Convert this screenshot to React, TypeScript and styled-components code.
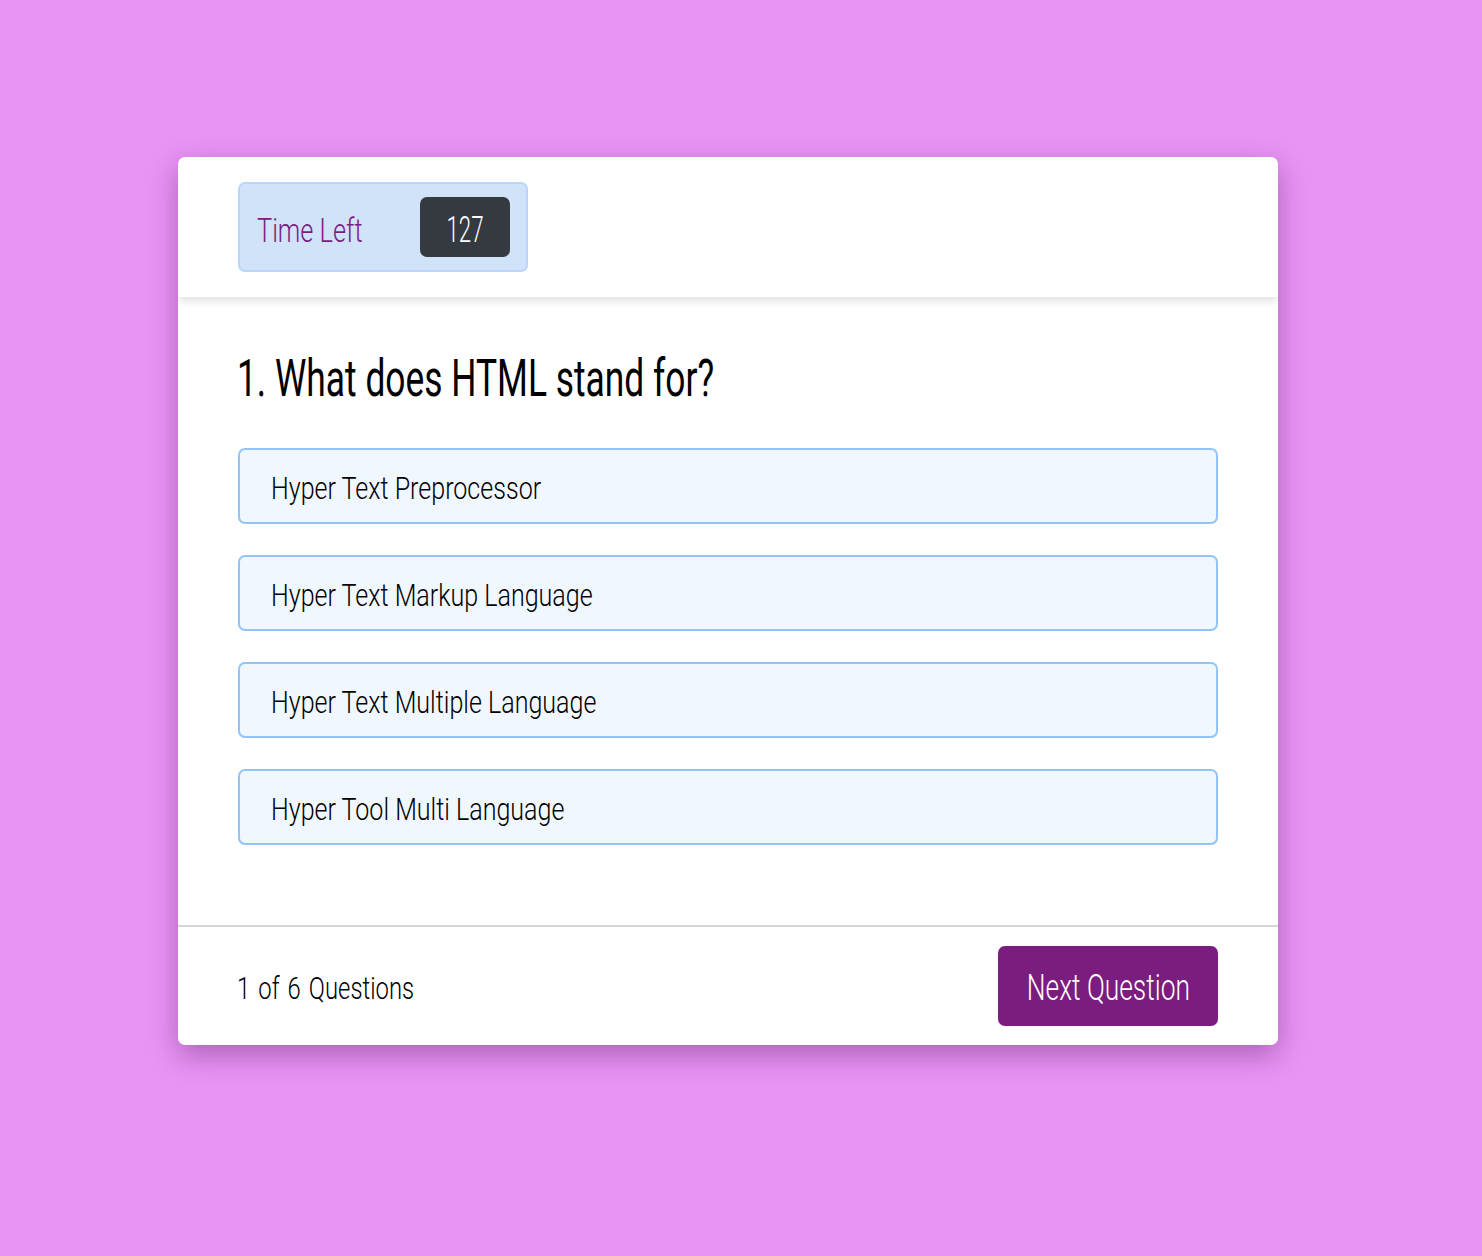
import React from "react";
import styled, { createGlobalStyle } from "styled-components";

const Global = createGlobalStyle`
  html, body { margin: 0; padding: 0; }
  body {
    background: #e893f5;
    font-family: Roboto, "Liberation Sans", sans-serif;
  }
`;

const Page = styled.div`
  min-height: 1256px;
  padding: 157px 0 0 178px;
  box-sizing: border-box;
`;

const Card = styled.div`
  width: 1100px;
  height: 888px;
  background: #fff;
  border-radius: 7px;
  box-shadow: 0 10px 28px rgba(60, 10, 70, 0.35);
  display: flex;
  flex-direction: column;
  overflow: hidden;
`;

const Narrow = styled.span<{ $scale?: number; $origin?: string }>`
  display: inline-block;
  white-space: nowrap;
  transform: scaleX(${(p) => p.$scale ?? 0.8});
  transform-origin: ${(p) => p.$origin ?? "left"} center;
`;

const Header = styled.div`
  height: 140px;
  box-sizing: border-box;
  padding: 25px 60px;
  box-shadow: 0 4px 8px rgba(0, 0, 0, 0.12);
  position: relative;
  z-index: 1;
`;

const Timer = styled.div`
  width: 290px;
  height: 90px;
  box-sizing: border-box;
  background: #d1e3f9;
  border: 2px solid #bad7fb;
  border-radius: 7px;
  display: flex;
  align-items: center;
  justify-content: space-between;
  padding: 0 16px 0 17px;
`;

const TimerLabel = styled.span`
  color: #7b1d7e;
  font-size: 34px;
  font-weight: 300;
  padding-top: 5px;
`;

const TimerValue = styled.span`
  width: 90px;
  height: 60px;
  border-radius: 7px;
  background: #343a40;
  color: #fff;
  font-size: 36px;
  font-weight: 300;
  display: flex;
  align-items: center;
  justify-content: center;
  padding-top: 5px;
  box-sizing: border-box;
`;

const Body = styled.div`
  flex: 1;
  padding: 52px 60px 0;
`;

const Question = styled.h2`
  margin: 0 0 39px -1px;
  font-size: 52px;
  font-weight: 400;
  color: #000;
  line-height: 60px;
`;

const Options = styled.div`
  display: flex;
  flex-direction: column;
  gap: 31px;
`;

const Option = styled.div`
  height: 76px;
  box-sizing: border-box;
  background: #f0f7ff;
  border: 2px solid #92c4f6;
  border-radius: 7px;
  display: flex;
  align-items: center;
  padding: 4px 0 0 31px;
  font-size: 32px;
  font-weight: 300;
  color: #000;
`;

const Footer = styled.div`
  height: 120px;
  box-sizing: border-box;
  border-top: 2px solid #d5d5d5;
  display: flex;
  align-items: center;
  justify-content: space-between;
  padding: 0 60px 0 59px;
`;

const Count = styled.span`
  font-size: 32px;
  font-weight: 300;
  color: #000;
  padding-top: 4px;
  word-spacing: 3px;
`;

const NextButton = styled.button`
  width: 220px;
  height: 80px;
  border: none;
  border-radius: 7px;
  background: #7b1d7e;
  color: #fff;
  font-family: inherit;
  font-size: 36px;
  font-weight: 300;
  padding: 4px 0 0;
  cursor: pointer;
  display: flex;
  align-items: center;
  justify-content: center;
`;

const options = [
  "Hyper Text Preprocessor",
  "Hyper Text Markup Language",
  "Hyper Text Multiple Language",
  "Hyper Tool Multi Language",
];

export default function App() {
  return (
    <>
      <Global />
      <Page>
        <Card>
          <Header>
            <Timer>
              <TimerLabel>
                <Narrow $scale={0.745}>Time Left</Narrow>
              </TimerLabel>
              <TimerValue>
                <Narrow $scale={0.62} $origin="center">
                  127
                </Narrow>
              </TimerValue>
            </Timer>
          </Header>
          <Body>
            <Question>
              <Narrow $scale={0.68}>1. What does HTML stand for?</Narrow>
            </Question>
            <Options>
              {options.map((o) => (
                <Option key={o}>
                  <Narrow $scale={0.783}>{o}</Narrow>
                </Option>
              ))}
            </Options>
          </Body>
          <Footer>
            <Count>
              <Narrow $scale={0.745}>1 of 6 Questions</Narrow>
            </Count>
            <NextButton>
              <Narrow $scale={0.732} $origin="center">
                Next Question
              </Narrow>
            </NextButton>
          </Footer>
        </Card>
      </Page>
    </>
  );
}
